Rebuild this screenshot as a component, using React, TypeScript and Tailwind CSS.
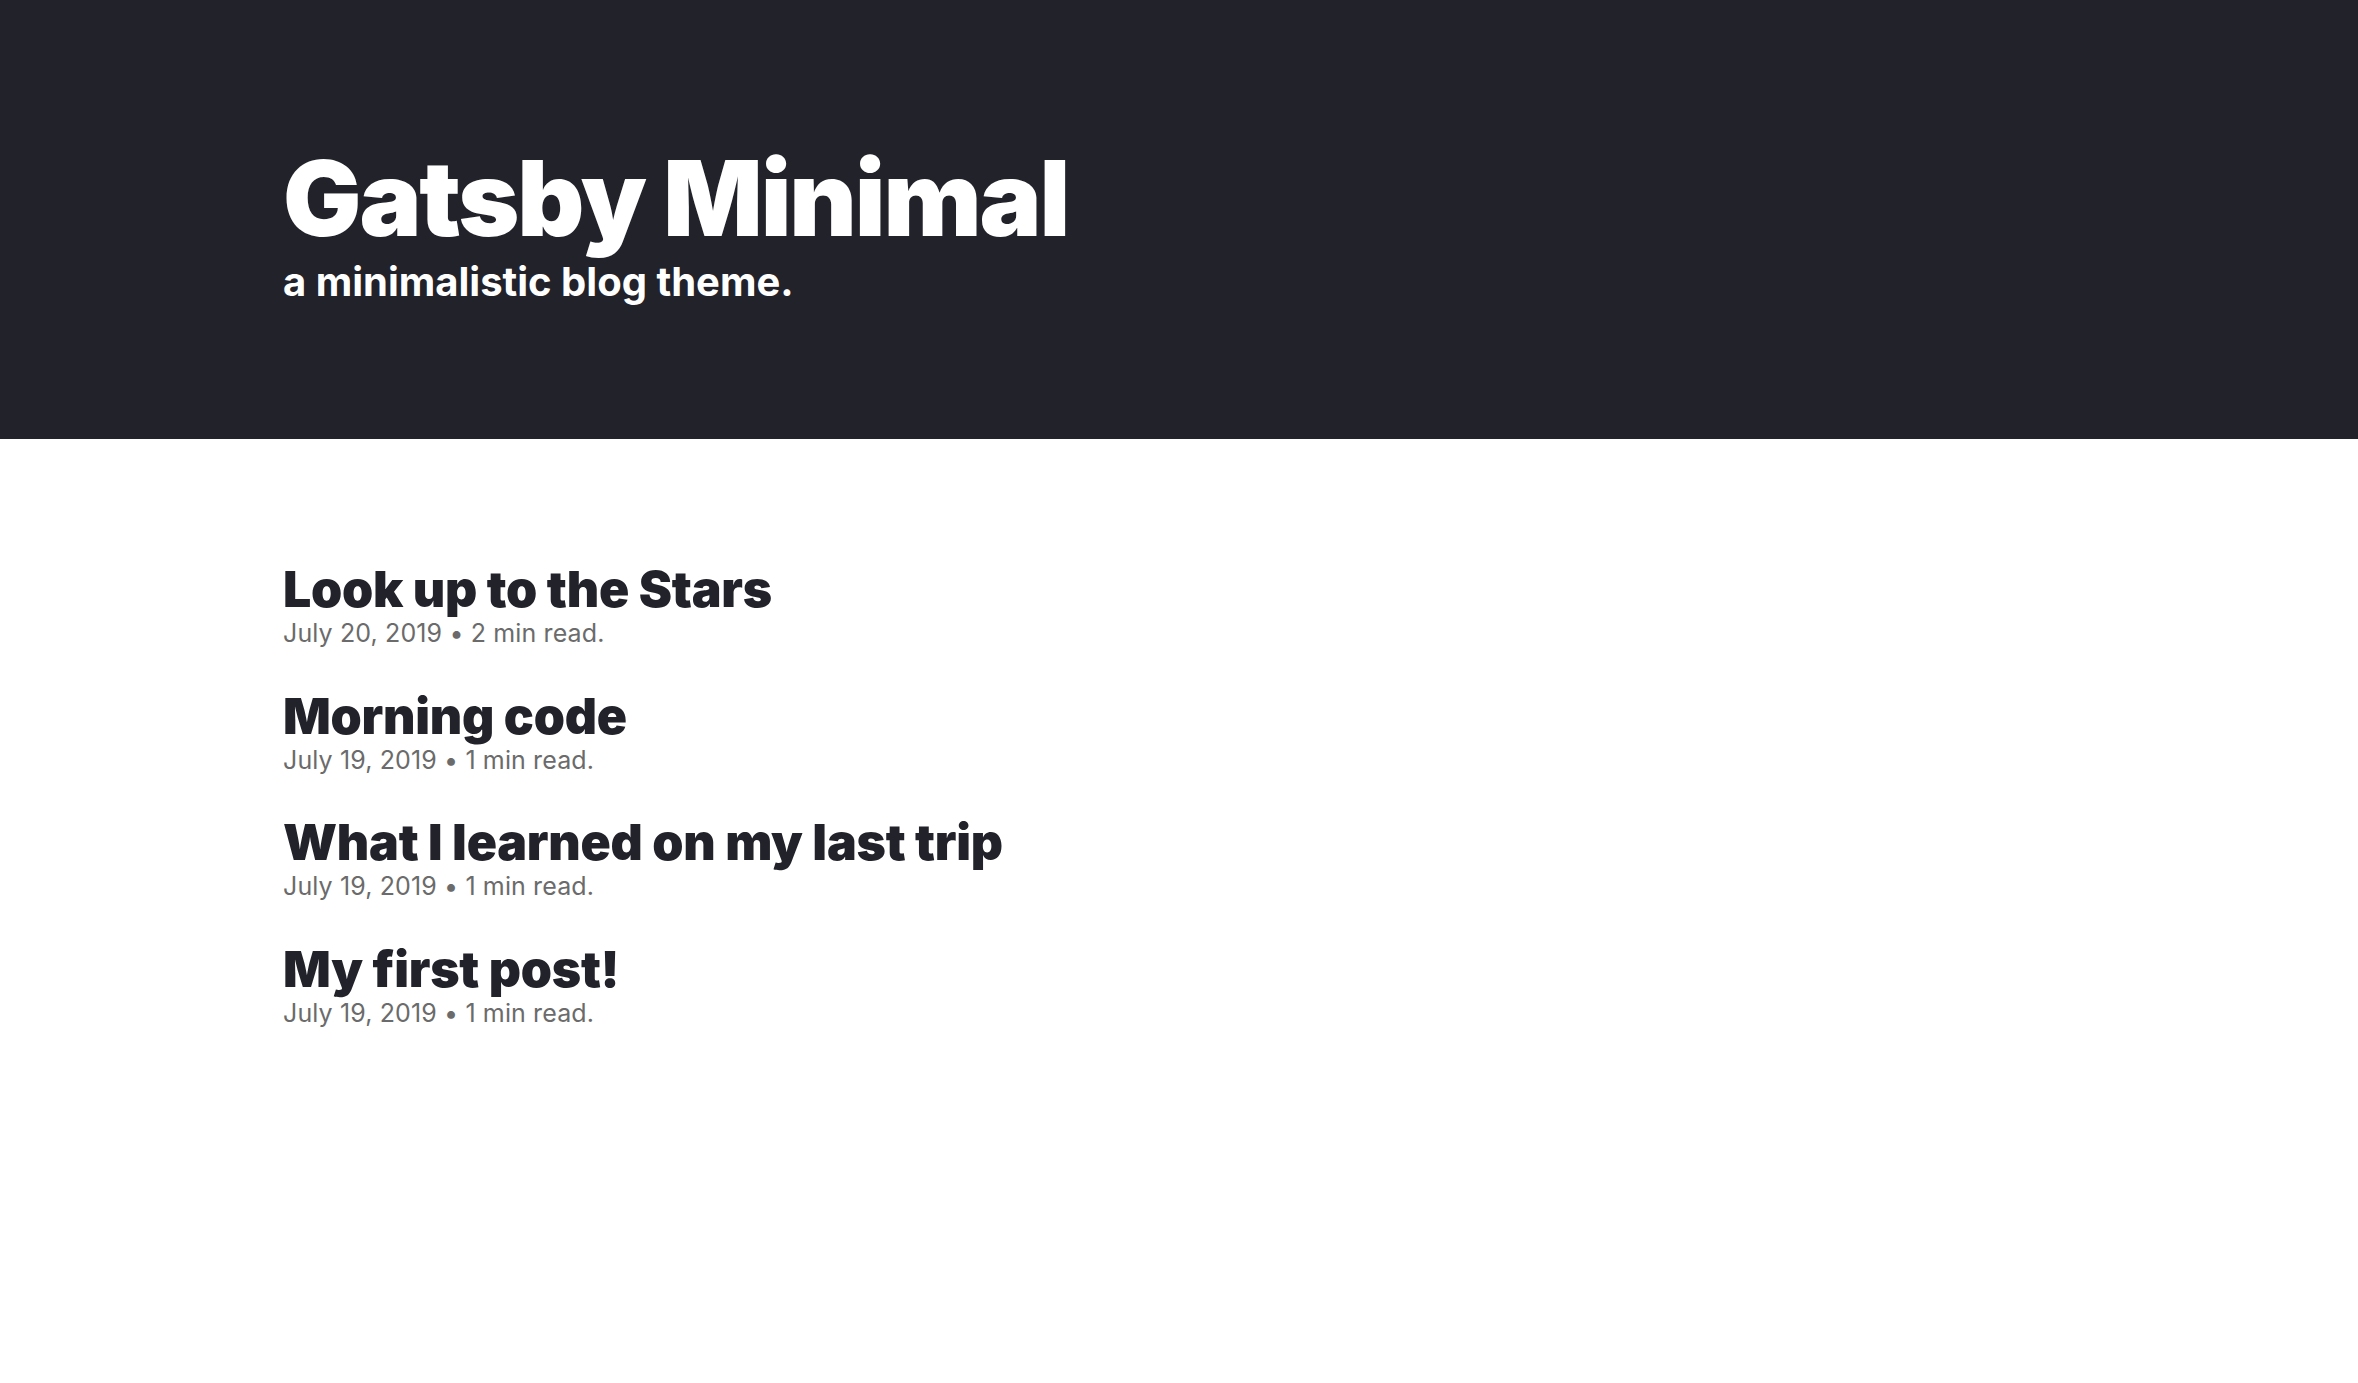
const posts = [
  { title: "Look up to the Stars", date: "July 20, 2019", read: "2 min read." },
  { title: "Morning code", date: "July 19, 2019", read: "1 min read." },
  { title: "What I learned on my last trip", date: "July 19, 2019", read: "1 min read." },
  { title: "My first post!", date: "July 19, 2019", read: "1 min read." },
];

export default function App() {
  return (
    <div className="min-h-screen bg-white font-['Inter',sans-serif]">
      <header className="h-[439px] bg-[#22222b]">
        <div className="mx-auto max-w-[1792px] pt-[141px]">
          <h1 className="text-[104px] font-black leading-[1.1] tracking-[-0.02em] text-white">
            Gatsby Minimal
          </h1>
          <p className="mt-[7px] text-[40px] font-bold leading-none text-white">
            a minimalistic blog theme.
          </p>
        </div>
      </header>

      <main className="mx-auto max-w-[1792px] pt-[125px]">
        {posts.map((post) => (
          <article key={post.title} className="mb-[38px]">
            <h2 className="text-[50px] font-black leading-none tracking-[-0.005em] text-[#22222b]">
              {post.title}
            </h2>
            <p className="mt-[1px] text-[25px] leading-[1.5] tracking-[0.005em] text-[#6b6b6b]">
              {post.date} • {post.read}
            </p>
          </article>
        ))}
      </main>
    </div>
  );
}
